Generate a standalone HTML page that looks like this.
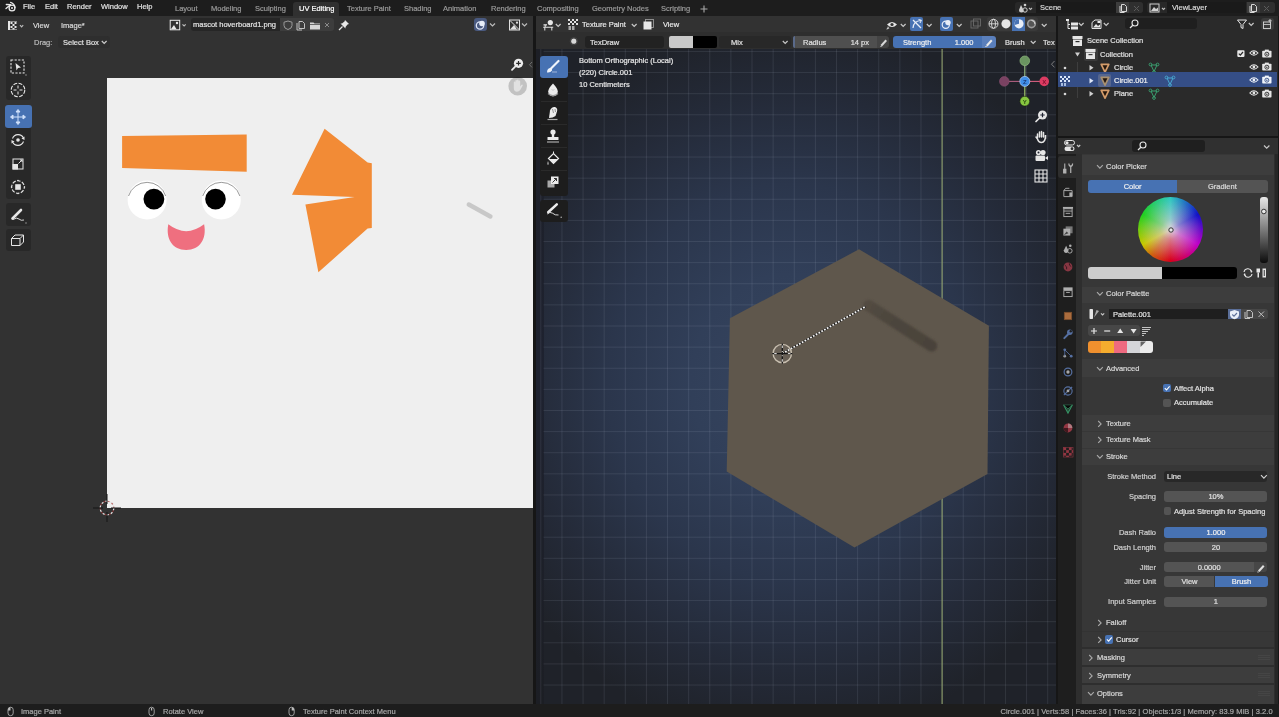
<!DOCTYPE html>
<html><head><meta charset="utf-8">
<style>
*{box-sizing:border-box;margin:0;padding:0}
html,body{width:1279px;height:717px;overflow:hidden;background:#161616}
body{position:relative;font-family:"Liberation Sans",sans-serif;font-size:7.5px;color:#d9d9d9;line-height:1}
.a{position:absolute}
.t{position:absolute;white-space:nowrap;line-height:10px;will-change:transform;-webkit-text-stroke:0.2px currentColor}
svg{position:absolute;overflow:visible}
</style></head><body>
<div class="a" style="left:0px;top:0px;width:1279px;height:16px;background:#1d1d1d;"></div>
<svg style="left:0px;top:0px;" width="20" height="16" viewBox="0 0 20 16"><g fill="none" stroke="#e8e8e8" stroke-width="1.3" stroke-linecap="round"><circle cx="12" cy="8" r="2.9"/><path d="M6 8.6 L10.2 5.1"/><path d="M6.3 4.5 L10.6 4.6"/><path d="M10.6 2.4 Q14.6 3.8 15 7.6"/></g><circle cx="12" cy="8" r="1" fill="#e8e8e8"/></svg>
<div class="t" style="left:22.7px;top:2.44px;color:#e0e0e0;">File</div>
<div class="t" style="left:44.6px;top:2.44px;color:#e0e0e0;">Edit</div>
<div class="t" style="left:67.2px;top:2.44px;color:#e0e0e0;">Render</div>
<div class="t" style="left:100.5px;top:2.44px;color:#e0e0e0;">Window</div>
<div class="t" style="left:137.1px;top:2.44px;color:#e0e0e0;">Help</div>
<div class="a" style="left:292.5px;top:2px;width:46.2px;height:14px;background:#303030;border-radius:3px 3px 0 0"></div>
<div class="t" style="left:175.2px;top:4.23px;color:#9a9a9a;">Layout</div>
<div class="t" style="left:211px;top:4.23px;color:#9a9a9a;">Modeling</div>
<div class="t" style="left:254.6px;top:4.23px;color:#9a9a9a;">Sculpting</div>
<div class="t" style="left:298.5px;top:4.23px;color:#ffffff;">UV Editing</div>
<div class="t" style="left:346.8px;top:4.23px;color:#9a9a9a;">Texture Paint</div>
<div class="t" style="left:403.9px;top:4.23px;color:#9a9a9a;">Shading</div>
<div class="t" style="left:442.9px;top:4.23px;color:#9a9a9a;">Animation</div>
<div class="t" style="left:490.5px;top:4.23px;color:#9a9a9a;">Rendering</div>
<div class="t" style="left:537px;top:4.23px;color:#9a9a9a;">Compositing</div>
<div class="t" style="left:591.9px;top:4.23px;color:#9a9a9a;">Geometry Nodes</div>
<div class="t" style="left:660.6px;top:4.23px;color:#9a9a9a;">Scripting</div>
<svg style="left:700px;top:5px;" width="8" height="8" viewBox="0 0 8 8"><path d="M4 0.5V7.5M0.5 4H7.5" stroke="#a8a8a8" stroke-width="1.1"/></svg>
<div class="a" style="left:1015.3px;top:1.7px;width:127.7px;height:11.8px;background:#282828;border-radius:3px"></div>
<div class="a" style="left:1036px;top:1.7px;width:79.6px;height:11.8px;background:#1a1a1a;"></div>
<div class="t" style="left:1040.4px;top:2.63px;color:#d8d8d8;">Scene</div>
<div class="a" style="left:1115.6px;top:1.7px;width:13.7px;height:11.8px;background:#3d3d3d;"></div>
<div class="a" style="left:1129.3px;top:1.7px;width:13.700000000000045px;height:11.8px;background:#2f2f2f;border-radius:0 3px 3px 0"></div>
<svg style="left:1117.5px;top:2.5px;" width="10" height="10" viewBox="0 0 10 10"><path d="M3.5 1.5h3l2 2V8.5h-5z M2 3v6.5h4.5" fill="none" stroke="#d8d8d8" stroke-width="1"/></svg>
<svg style="left:1132.5px;top:4.5px;" width="7" height="7" viewBox="0 0 7 7"><path d="M1 1L6 6M6 1L1 6" stroke="#5a5a5a" stroke-width="1"/></svg>
<div class="a" style="left:1147.2px;top:1.7px;width:127.7px;height:11.8px;background:#282828;border-radius:3px"></div>
<div class="a" style="left:1166.9px;top:1.7px;width:79.6px;height:11.8px;background:#1a1a1a;"></div>
<div class="t" style="left:1172.3px;top:2.63px;color:#d8d8d8;">ViewLayer</div>
<div class="a" style="left:1246.5px;top:1.7px;width:13.7px;height:11.8px;background:#3d3d3d;"></div>
<div class="a" style="left:1260.2px;top:1.7px;width:14.700000000000045px;height:11.8px;background:#2f2f2f;border-radius:0 3px 3px 0"></div>
<svg style="left:1248.4px;top:2.5px;" width="10" height="10" viewBox="0 0 10 10"><path d="M3.5 1.5h3l2 2V8.5h-5z M2 3v6.5h4.5" fill="none" stroke="#d8d8d8" stroke-width="1"/></svg>
<svg style="left:1263.4px;top:4.5px;" width="7" height="7" viewBox="0 0 7 7"><path d="M1 1L6 6M6 1L1 6" stroke="#5a5a5a" stroke-width="1"/></svg>
<svg style="left:1017px;top:2px;" width="18" height="12" viewBox="0 0 18 12"><path d="M4 3 L2 8 Q2 10.5 4.5 10.5 Q7 10.5 6.5 8 Z" fill="#cfcfcf"/><circle cx="8" cy="8" r="2.2" fill="none" stroke="#cfcfcf" stroke-width="1"/><circle cx="8" cy="3" r="1.3" fill="#cfcfcf"/><path d="M12 6l1.5 1.5L15 6" fill="none" stroke="#bbb" stroke-width="1.1"/></svg>
<svg style="left:1149px;top:2px;" width="20" height="12" viewBox="0 0 20 12"><rect x="1" y="2" width="9" height="8" fill="none" stroke="#cfcfcf" stroke-width="1"/><path d="M2 9l3-4 2 2 2-1.5V9z" fill="#cfcfcf"/><path d="M13 6l1.5 1.5L16 6" fill="none" stroke="#bbb" stroke-width="1.1"/></svg>
<div class="a" style="left:0px;top:16px;width:533px;height:688px;background:#323232;"></div>
<div class="a" style="left:533px;top:16px;width:3px;height:688px;background:#161616;"></div>
<svg style="left:6.5px;top:19.5px;" width="20" height="12" viewBox="0 0 20 12"><rect x="1" y="1" width="9" height="9" fill="#e6e6e6"/><rect x="3" y="1.5" width="7" height="8" fill="#303030"/><path d="M3.5 2h2v2h-2zM5.5 4h2v2h-2zM7.5 2h2v2h-2zM3.5 6h2v2h-2zM7.5 6h2v2h-2zM5.5 8h2v1.5h-2z" fill="#e6e6e6"/><path d="M13 5.2l1.6 1.6 1.6-1.6" fill="none" stroke="#bbb" stroke-width="1.2"/></svg>
<div class="t" style="left:33.3px;top:20.53px;">View</div>
<div class="t" style="left:60.5px;top:20.53px;">Image*</div>
<svg style="left:168px;top:19px;" width="22" height="12" viewBox="0 0 22 12"><rect x="2.2" y="1.3" width="9.5" height="9.5" fill="none" stroke="#e8e8e8" stroke-width="1"/><path d="M2.8 10.3 L6 6 L8.5 10.3Z" fill="#e8e8e8"/><circle cx="9" cy="4" r="1.2" fill="#e8e8e8"/><path d="M14.5 5.3l1.6 1.6 1.6-1.6" fill="none" stroke="#bbb" stroke-width="1.2"/></svg>
<div class="a" style="left:190.5px;top:18.4px;width:90px;height:12.5px;background:#262626;border-radius:3px 0 0 3px"></div>
<div class="t" style="left:193.3px;top:20.34px;color:#e2e2e2;">mascot hoverboard1.png</div>
<div class="a" style="left:280.4px;top:18.4px;width:53.5px;height:12.5px;background:#3d3d3d;border-radius:0 3px 3px 0"></div>
<svg style="left:283px;top:19px;" width="50" height="12" viewBox="0 0 50 12"><path d="M5 2 L9 3.2 V6.5 Q9 9.5 5 10.5 Q1 9.5 1 6.5 V3.2Z" fill="none" stroke="#9a9a9a" stroke-width="1"/><path d="M16 2.5h3.5l2 2V9.5h-5.5z M14 4v7h5" fill="none" stroke="#cfcfcf" stroke-width="0.9"/><path d="M27 3.5h3.5l1 1H37v6H27z" fill="#d8d8d8"/><path d="M27 5.5H37" stroke="#3b3b3b" stroke-width="0.7"/><path d="M42 4L46 8M46 4L42 8" stroke="#8a8a8a" stroke-width="1"/></svg>
<svg style="left:337px;top:18px;" width="14" height="14" viewBox="0 0 14 14"><path d="M8 2 L12 6 L10.5 6.5 L8.5 9 L8.5 10.5 L3.5 5.5 L5 5.5 L7.5 3.5Z" fill="#e8e8e8"/><path d="M5.5 8.5 L2 12" stroke="#e8e8e8" stroke-width="1.2"/></svg>
<div class="a" style="left:473.5px;top:18px;width:13.4px;height:13.4px;background:#4a5a80;border-radius:3px"></div>
<svg style="left:473.5px;top:18px;" width="14" height="14" viewBox="0 0 14 14"><circle cx="6" cy="7.5" r="3.7" fill="none" stroke="#dfe6f5" stroke-width="1.3"/><circle cx="8" cy="5.5" r="2.8" fill="#e8eef8"/></svg>
<svg style="left:489px;top:22px;" width="8" height="6" viewBox="0 0 8 6"><path d="M1 1.5l2.5 2.5 2.5-2.5" fill="none" stroke="#bbb" stroke-width="1.2"/></svg>
<svg style="left:508px;top:19px;" width="14" height="12" viewBox="0 0 14 12"><rect x="1.5" y="1" width="10" height="10" fill="none" stroke="#e0e0e0" stroke-width="1"/><path d="M2 1.5 L11 10.5" stroke="#e0e0e0" stroke-width="1"/><path d="M2 10.5L6 6l3 4.5z" fill="#e0e0e0"/><circle cx="9" cy="3.7" r="1.1" fill="#e0e0e0"/></svg>
<svg style="left:521px;top:22px;" width="8" height="6" viewBox="0 0 8 6"><path d="M1 1.5l2.5 2.5 2.5-2.5" fill="none" stroke="#bbb" stroke-width="1.2"/></svg>
<div class="t" style="left:33.5px;top:37.83px;color:#bdbdbd;">Drag:</div>
<div class="a" style="left:58px;top:36px;width:52px;height:12px;background:#2e2e2e;border-radius:3px"></div>
<div class="t" style="left:63px;top:37.83px;color:#e0e0e0;">Select Box</div>
<svg style="left:100.5px;top:40px;" width="7" height="5" viewBox="0 0 7 5"><path d="M0.8 1l2.4 2.4 2.4-2.4" fill="none" stroke="#ccc" stroke-width="1.2"/></svg>
<div class="a" style="left:107px;top:78px;width:426px;height:430px;background:#efefef;"></div>
<svg style="left:107px;top:78px;" width="426" height="430" viewBox="0 0 426 430"><polygon points="15.1,58 139.7,56.6 139.7,93.8 15.1,89.9" fill="#f28b36"/><circle cx="40.1" cy="122" r="19.5" fill="#ffffff"/><path d="M21.5 118 A19.5 19.5 0 0 1 58.7 118" fill="none" stroke="#555" stroke-width="0.6"/><circle cx="46.9" cy="121.1" r="10.4" fill="#000"/><circle cx="114.3" cy="122" r="19.5" fill="#ffffff"/><path d="M95.7 118 A19.5 19.5 0 0 1 132.9 118" fill="none" stroke="#555" stroke-width="0.6"/><circle cx="108.5" cy="121.1" r="10.3" fill="#000"/><path d="M61.3 146.3 Q79.2 160 97.1 146.3 C100 161 93 172 79.2 172 C65.5 172 58.5 161 61.3 146.3Z" fill="#ef6f7f"/><polygon points="217.6,50.8 260.6,84.5 264.8,85.2 264.8,149.9 260.6,150.6 211.4,194.2 198.4,126.5 247.6,118.9 185,116.8" fill="#f28b36"/><path d="M361.8 126.5 L383.4 138.5" stroke="#c8c8c8" stroke-width="4.5" stroke-linecap="round"/></svg>
<svg style="left:507px;top:76px;" width="22" height="22" viewBox="0 0 22 22"><circle cx="10.7" cy="10.1" r="9.3" fill="rgba(0,0,0,0.19)"/><path d="M6.8 11.5 V6.5 Q6.8 5.6 7.6 5.6 Q8.4 5.6 8.4 6.5 V10 V4.8 Q8.4 3.9 9.2 3.9 Q10 3.9 10 4.8 V10 V4.5 Q10 3.6 10.8 3.6 Q11.6 3.6 11.6 4.5 V10 V5.5 Q11.6 4.6 12.4 4.6 Q13.2 4.6 13.2 5.5 V10.5 L14.2 9 Q15 8.2 15.6 8.8 Q16 9.3 15.5 10 L13.2 14 Q12 15.8 10 15.8 Q6.8 15.8 6.8 12Z" fill="rgba(255,255,255,0.5)"/></svg>
<svg style="left:509px;top:57px;" width="18" height="16" viewBox="0 0 18 16"><circle cx="9.5" cy="6.3" r="4.6" fill="#ececec"/><path d="M9.5 4V8.6M7.2 6.3H11.8" stroke="#2a2a2a" stroke-width="1.2"/><path d="M6.2 9.6 L3 12.8" stroke="#ececec" stroke-width="1.8" stroke-linecap="round"/></svg>
<svg style="left:528px;top:61px;" width="6" height="8" viewBox="0 0 6 8"><path d="M4 1 L1.5 3.7 L4 6.4" fill="none" stroke="#777" stroke-width="0.9"/></svg>
<svg style="left:92px;top:493px;" width="30" height="30" viewBox="0 0 30 30"><circle cx="15" cy="15" r="6.8" fill="none" stroke="#e8e8e8" stroke-width="1.2" stroke-dasharray="2.4 1.9"/><circle cx="15" cy="15" r="6.8" fill="none" stroke="#a03030" stroke-width="1.2" stroke-dasharray="1.9 2.4" stroke-dashoffset="-2.4" opacity="0.7"/><path d="M15 1V11M15 19V29M1 15H11M19 15H29" stroke="#151515" stroke-width="1"/></svg>
<div class="a" style="left:6px;top:56px;width:25px;height:44px;background:#282828;border-radius:3px"></div>
<div class="a" style="left:6px;top:105px;width:25px;height:94px;background:#282828;border-radius:3px"></div>
<div class="a" style="left:6px;top:203px;width:25px;height:23px;background:#282828;border-radius:3px"></div>
<div class="a" style="left:6px;top:229px;width:25px;height:22px;background:#282828;border-radius:3px"></div>
<div class="a" style="left:5px;top:105px;width:27.4px;height:22.5px;background:#4772b3;border-radius:3px"></div>
<svg style="left:9px;top:58px;" width="18" height="18" viewBox="0 0 18 18"><rect x="2" y="2" width="13" height="13" fill="none" stroke="#e6e6e6" stroke-width="1.1" stroke-dasharray="2.2 1.4"/><path d="M6.5 5 L12 9.5 L9 10 L7.5 12.5Z" fill="#e6e6e6"/><circle cx="17" cy="17" r="0.7" fill="#aaa"/></svg>
<svg style="left:9px;top:81px;" width="18" height="18" viewBox="0 0 18 18"><circle cx="9" cy="9" r="6.8" fill="none" stroke="#e6e6e6" stroke-width="1.1" stroke-dasharray="4 1.4"/><path d="M9 4.5V7.5M9 10.5V13.5M4.5 9H7.5M10.5 9H13.5" stroke="#e6e6e6" stroke-width="1"/></svg>
<svg style="left:9px;top:108px;" width="18" height="18" viewBox="0 0 18 18"><g fill="#cfe0fa" stroke="#cfe0fa" stroke-width="1"><path d="M9 3V15M3 9H15" fill="none"/><path d="M9 1.5L7 4H11Z"/><path d="M9 16.5L7 14H11Z"/><path d="M1.5 9L4 7V11Z"/><path d="M16.5 9L14 7V11Z"/></g></svg>
<svg style="left:9px;top:131px;" width="18" height="18" viewBox="0 0 18 18"><path d="M3.5 7.5 A6 6 0 0 1 14.5 7" fill="none" stroke="#e6e6e6" stroke-width="1.1"/><path d="M14.5 10.5 A6 6 0 0 1 3.5 11" fill="none" stroke="#e6e6e6" stroke-width="1.1"/><path d="M12.5 7.5L15.5 5.5L15.5 9Z M5.5 10.5L2.5 12.5L2.5 9Z" fill="#e6e6e6"/><circle cx="9" cy="9" r="1.8" fill="#e6e6e6"/></svg>
<svg style="left:9px;top:155px;" width="18" height="18" viewBox="0 0 18 18"><rect x="4" y="4" width="10" height="10" fill="none" stroke="#e6e6e6" stroke-width="1"/><rect x="3.5" y="9" width="5.5" height="5.5" fill="#e6e6e6"/><path d="M9.5 8.5L13 5M11 5H13V7" fill="none" stroke="#e6e6e6" stroke-width="1"/></svg>
<svg style="left:9px;top:178px;" width="18" height="18" viewBox="0 0 18 18"><circle cx="9" cy="9" r="6.3" fill="none" stroke="#e6e6e6" stroke-width="1.1" stroke-dasharray="3.5 1.45" stroke-dashoffset="1.7"/><rect x="6.2" y="6.2" width="5.6" height="5.6" fill="#e6e6e6"/><path d="M9 1.5L8 3H10ZM9 16.5L8 15H10ZM1.5 9L3 8V10ZM16.5 9L15 8V10Z" fill="#e6e6e6"/></svg>
<svg style="left:9px;top:206px;" width="18" height="18" viewBox="0 0 18 18"><path d="M3.5 12.5 L12 4" stroke="#e6e6e6" stroke-width="2.6" stroke-linecap="round"/><path d="M4 13.5 Q8 11 10 13 Q12 15 15 14" fill="none" stroke="#e6e6e6" stroke-width="0.9"/><circle cx="17" cy="17" r="0.7" fill="#aaa"/></svg>
<svg style="left:9px;top:231px;" width="18" height="18" viewBox="0 0 18 18"><path d="M2.5 7.5 L6 4 H14.5 V11 L11 14.5 H2.5Z M2.5 7.5 H11 V14.5 M11 7.5 L14.5 4" fill="none" stroke="#e6e6e6" stroke-width="1"/></svg>
<div class="a" style="left:0px;top:704px;width:1279px;height:13px;background:#1d1d1d;"></div>
<svg style="left:7px;top:705.5px;" width="8" height="11" viewBox="0 0 8 11"><rect x="1" y="1.2" width="5.2" height="8.5" rx="2.6" fill="none" stroke="#aaa" stroke-width="0.9"/><path d="M3.5 1.2 Q1 1.2 1 4 V4.5 H3.5Z" fill="#bbb"/></svg>
<div class="t" style="left:21.3px;top:706.83px;color:#a8a8a8;">Image Paint</div>
<svg style="left:147.5px;top:705.5px;" width="8" height="11" viewBox="0 0 8 11"><rect x="1" y="1.2" width="5.2" height="8.5" rx="2.6" fill="none" stroke="#aaa" stroke-width="0.9"/><rect x="3" y="2" width="1.2" height="2.5" fill="#bbb"/></svg>
<div class="t" style="left:162.6px;top:706.83px;color:#a8a8a8;">Rotate View</div>
<svg style="left:288px;top:705.5px;" width="8" height="11" viewBox="0 0 8 11"><rect x="1" y="1.2" width="5.2" height="8.5" rx="2.6" fill="none" stroke="#aaa" stroke-width="0.9"/><path d="M3.7 1.2 Q6.2 1.2 6.2 4 V4.5 H3.7Z" fill="#bbb"/></svg>
<div class="t" style="left:303.1px;top:706.83px;color:#a8a8a8;">Texture Paint Context Menu</div>
<div class="t" style="left:1000px;top:706.83px;color:#a8a8a8;width:272.7px;text-align:right;letter-spacing:0.065px">Circle.001 | Verts:58 | Faces:36 | Tris:92 | Objects:1/3 | Memory: 83.9 MiB | 3.2.0</div>
<div class="a" style="left:536px;top:16px;width:520px;height:688px;background:radial-gradient(ellipse 330px 360px at 254px 366px,#36455f 0%,#313f59 30%,#2b364c 55%,#242a38 80%,#1f2229 100%);"></div>
<div class="a" style="left:536px;top:48.6px;width:7.5px;height:655.4px;background:linear-gradient(#1d1f26,#1e2230 50%,#1c1e24);"></div>
<svg style="left:536px;top:16px;" width="520" height="688" viewBox="0 0 520 688"><g stroke="rgba(205,215,235,0.105)" stroke-width="1"><line x1="4.82" y1="32.6" x2="4.82" y2="688"/><line x1="25.94" y1="32.6" x2="25.94" y2="688"/><line x1="47.06" y1="32.6" x2="47.06" y2="688"/><line x1="68.18" y1="32.6" x2="68.18" y2="688"/><line x1="89.30" y1="32.6" x2="89.30" y2="688"/><line x1="110.42" y1="32.6" x2="110.42" y2="688"/><line x1="131.54" y1="32.6" x2="131.54" y2="688"/><line x1="152.66" y1="32.6" x2="152.66" y2="688"/><line x1="173.78" y1="32.6" x2="173.78" y2="688"/><line x1="194.90" y1="32.6" x2="194.90" y2="688"/><line x1="216.02" y1="32.6" x2="216.02" y2="688"/><line x1="237.14" y1="32.6" x2="237.14" y2="688"/><line x1="258.26" y1="32.6" x2="258.26" y2="688"/><line x1="279.38" y1="32.6" x2="279.38" y2="688"/><line x1="300.50" y1="32.6" x2="300.50" y2="688"/><line x1="321.62" y1="32.6" x2="321.62" y2="688"/><line x1="342.74" y1="32.6" x2="342.74" y2="688"/><line x1="363.86" y1="32.6" x2="363.86" y2="688"/><line x1="384.98" y1="32.6" x2="384.98" y2="688"/><line x1="406.10" y1="32.6" x2="406.10" y2="688"/><line x1="427.22" y1="32.6" x2="427.22" y2="688"/><line x1="448.34" y1="32.6" x2="448.34" y2="688"/><line x1="469.46" y1="32.6" x2="469.46" y2="688"/><line x1="490.58" y1="32.6" x2="490.58" y2="688"/><line x1="511.70" y1="32.6" x2="511.70" y2="688"/><line x1="7.5" y1="35.44" x2="520" y2="35.44"/><line x1="7.5" y1="56.56" x2="520" y2="56.56"/><line x1="7.5" y1="77.68" x2="520" y2="77.68"/><line x1="7.5" y1="98.80" x2="520" y2="98.80"/><line x1="7.5" y1="119.92" x2="520" y2="119.92"/><line x1="7.5" y1="141.04" x2="520" y2="141.04"/><line x1="7.5" y1="162.16" x2="520" y2="162.16"/><line x1="7.5" y1="183.28" x2="520" y2="183.28"/><line x1="7.5" y1="204.40" x2="520" y2="204.40"/><line x1="7.5" y1="225.52" x2="520" y2="225.52"/><line x1="7.5" y1="246.64" x2="520" y2="246.64"/><line x1="7.5" y1="267.76" x2="520" y2="267.76"/><line x1="7.5" y1="288.88" x2="520" y2="288.88"/><line x1="7.5" y1="310.00" x2="520" y2="310.00"/><line x1="7.5" y1="331.12" x2="520" y2="331.12"/><line x1="7.5" y1="352.24" x2="520" y2="352.24"/><line x1="7.5" y1="373.36" x2="520" y2="373.36"/><line x1="7.5" y1="394.48" x2="520" y2="394.48"/><line x1="7.5" y1="415.60" x2="520" y2="415.60"/><line x1="7.5" y1="436.72" x2="520" y2="436.72"/><line x1="7.5" y1="457.84" x2="520" y2="457.84"/><line x1="7.5" y1="478.96" x2="520" y2="478.96"/><line x1="7.5" y1="500.08" x2="520" y2="500.08"/><line x1="7.5" y1="521.20" x2="520" y2="521.20"/><line x1="7.5" y1="542.32" x2="520" y2="542.32"/><line x1="7.5" y1="563.44" x2="520" y2="563.44"/><line x1="7.5" y1="584.56" x2="520" y2="584.56"/><line x1="7.5" y1="605.68" x2="520" y2="605.68"/><line x1="7.5" y1="626.80" x2="520" y2="626.80"/><line x1="7.5" y1="647.92" x2="520" y2="647.92"/><line x1="7.5" y1="669.04" x2="520" y2="669.04"/></g></svg>
<svg style="left:0px;top:0px;" width="1279" height="717" viewBox="0 0 1279 717"><line x1="942.1" y1="48.6" x2="942.1" y2="704" stroke="#98aa70" stroke-width="1"/><polygon points="859,249.3 988.9,325.7 987.5,474 854.5,547.4 726.7,471.5 729.9,318.3" fill="#5f574c"/><defs><filter id="bl" x="-20%" y="-20%" width="140%" height="140%"><feGaussianBlur stdDeviation="0.9"/></filter><linearGradient id="sg" gradientUnits="userSpaceOnUse" x1="862" y1="301" x2="936" y2="349"><stop offset="0" stop-color="#544d43"/><stop offset="0.35" stop-color="#4d463d"/><stop offset="1" stop-color="#4a433a"/></linearGradient></defs><path d="M868.5 305.5 L931.5 345.8" stroke="url(#sg)" stroke-width="11.5" stroke-linecap="round" filter="url(#bl)"/></svg>
<div class="a" style="left:536px;top:16px;width:520px;height:16px;background:#323232;"></div>
<div class="a" style="left:536px;top:32px;width:520px;height:16.6px;background:#2e2e2e;"></div>
<svg style="left:542px;top:18px;" width="14" height="13" viewBox="0 0 14 13"><circle cx="8.3" cy="4.6" r="2.6" fill="#e6e6e6"/><path d="M1.2 9.2H11.2M1.5 6.9H5" stroke="#e6e6e6" stroke-width="1.1"/><path d="M2.8 9.2V12.5M9.8 9.2V12.5M3.2 6.9V9" stroke="#e6e6e6" stroke-width="1"/></svg>
<svg style="left:555px;top:22.5px;" width="7" height="5" viewBox="0 0 7 5"><path d="M0.8 1l2.4 2.4 2.4-2.4" fill="none" stroke="#c8c8c8" stroke-width="1.2"/></svg>
<svg style="left:567px;top:18px;" width="12" height="13" viewBox="0 0 12 13"><g fill="#e0e0e0"><rect x="1" y="1" width="2" height="2"/><rect x="5" y="1" width="2" height="2"/><rect x="9" y="1" width="2" height="2"/><rect x="3" y="3" width="2" height="2"/><rect x="7" y="3" width="2" height="2"/><rect x="1" y="5" width="2" height="2"/><rect x="5" y="5" width="2" height="2"/><rect x="9" y="5" width="2" height="2"/><rect x="1.5" y="8" width="2.5" height="4" fill="#aaa"/><rect x="5" y="8" width="2.5" height="4" fill="#aaa"/></g></svg>
<div class="t" style="left:582.2px;top:19.73px;color:#e6e6e6;">Texture Paint</div>
<svg style="left:631px;top:22.5px;" width="7" height="5" viewBox="0 0 7 5"><path d="M0.8 1l2.4 2.4 2.4-2.4" fill="none" stroke="#c8c8c8" stroke-width="1.2"/></svg>
<svg style="left:642px;top:18px;" width="13" height="13" viewBox="0 0 13 13"><rect x="3.5" y="1.5" width="8" height="8" fill="none" stroke="#999" stroke-width="0.9"/><rect x="1.5" y="3.5" width="8" height="8" fill="#e8e8e8"/></svg>
<div class="t" style="left:663.2px;top:19.73px;color:#e6e6e6;">View</div>
<svg style="left:885px;top:18px;" width="14" height="13" viewBox="0 0 14 13"><path d="M2 6.5 Q7 1.5 12 6.5 Q7 11.5 2 6.5Z" fill="#e6e6e6"/><circle cx="7" cy="6.5" r="1.6" fill="#303030"/><path d="M3 8 L1 12 L4.5 10.5Z" fill="#e6e6e6" stroke="#303030" stroke-width="0.5"/></svg>
<svg style="left:899.5px;top:22.5px;" width="7" height="5" viewBox="0 0 7 5"><path d="M0.8 1l2.4 2.4 2.4-2.4" fill="none" stroke="#c8c8c8" stroke-width="1.2"/></svg>
<div class="a" style="left:909.5px;top:17px;width:13.5px;height:13.5px;background:#4772b3;border-radius:2px"></div>
<svg style="left:909.5px;top:17px;" width="14" height="14" viewBox="0 0 14 14"><path d="M3 11 Q3.5 4 11 3.5" fill="none" stroke="#e8eef8" stroke-width="1.2"/><path d="M3 3 L11 11" stroke="#e8eef8" stroke-width="1.2"/><path d="M8.5 2.5L11.5 3.2L10 6" fill="none" stroke="#e8eef8" stroke-width="1"/></svg>
<svg style="left:926px;top:22.5px;" width="7" height="5" viewBox="0 0 7 5"><path d="M0.8 1l2.4 2.4 2.4-2.4" fill="none" stroke="#c8c8c8" stroke-width="1.2"/></svg>
<div class="a" style="left:939.5px;top:17px;width:13.5px;height:13.5px;background:#4772b3;border-radius:2px"></div>
<svg style="left:939.5px;top:17px;" width="14" height="14" viewBox="0 0 14 14"><circle cx="5.8" cy="7.8" r="3.6" fill="none" stroke="#e8eef8" stroke-width="1.2"/><circle cx="8" cy="5.6" r="2.7" fill="#e8eef8"/></svg>
<svg style="left:956px;top:22.5px;" width="7" height="5" viewBox="0 0 7 5"><path d="M0.8 1l2.4 2.4 2.4-2.4" fill="none" stroke="#c8c8c8" stroke-width="1.2"/></svg>
<svg style="left:969px;top:17px;" width="14" height="14" viewBox="0 0 14 14"><rect x="2" y="4" width="7" height="7" fill="none" stroke="#6a6a6a" stroke-width="0.9"/><rect x="4.5" y="2" width="7" height="7" fill="none" stroke="#6a6a6a" stroke-width="0.9"/></svg>
<div class="a" style="left:986.5px;top:17px;width:51px;height:13.5px;background:#3a3a3a;border-radius:3px"></div>
<div class="a" style="left:1012px;top:17px;width:13px;height:13.5px;background:#4772b3;"></div>
<svg style="left:986.5px;top:17px;" width="52" height="14" viewBox="0 0 52 14"><g fill="none" stroke="#e0e0e0" stroke-width="0.9"><circle cx="6.5" cy="6.8" r="4.5"/><ellipse cx="6.5" cy="6.8" rx="2" ry="4.5"/><path d="M2 6.8H11"/></g><circle cx="19" cy="6.8" r="4.6" fill="#e6e6e6"/><circle cx="32" cy="6.8" r="4.6" fill="#e8eef8"/><path d="M32 2.2 A4.6 4.6 0 0 0 27.6 8 L32 6.8Z" fill="#4772b3"/><circle cx="44.5" cy="6.8" r="4.6" fill="#9a9a9a"/><circle cx="44.5" cy="6.8" r="3" fill="#555"/><path d="M44.5 3.5 A3.3 3.3 0 0 1 47.8 6.8" stroke="#ddd" fill="none" stroke-width="1"/></svg>
<svg style="left:1040.5px;top:22.5px;" width="7" height="5" viewBox="0 0 7 5"><path d="M0.8 1l2.4 2.4 2.4-2.4" fill="none" stroke="#c8c8c8" stroke-width="1.2"/></svg>
<svg style="left:569px;top:36px;" width="10" height="10" viewBox="0 0 10 10"><circle cx="4.8" cy="5.2" r="2.6" fill="#d8d8d8"/><circle cx="4.8" cy="5.2" r="3.6" fill="none" stroke="#555" stroke-width="0.6"/></svg>
<div class="a" style="left:585.3px;top:36.2px;width:79.2px;height:11.8px;background:#222222;border-radius:3px"></div>
<div class="t" style="left:590px;top:37.63px;color:#e0e0e0;">TexDraw</div>
<div class="a" style="left:669.2px;top:36px;width:23.4px;height:11.8px;background:#c9c9c9;border-radius:2px 0 0 2px"></div>
<div class="a" style="left:692.6px;top:36px;width:24.4px;height:11.8px;background:#000000;border-radius:0 2px 2px 0"></div>
<div class="a" style="left:719px;top:36px;width:71.5px;height:11.8px;background:#282828;border-radius:3px"></div>
<div class="t" style="left:730.7px;top:37.63px;color:#e0e0e0;">Mix</div>
<svg style="left:782px;top:40px;" width="7" height="5" viewBox="0 0 7 5"><path d="M0.8 1l2.4 2.4 2.4-2.4" fill="none" stroke="#c8c8c8" stroke-width="1.2"/></svg>
<div class="a" style="left:792.7px;top:35.8px;width:84.7px;height:11.9px;background:#4f4f4f;border-radius:3px 0 0 3px"></div>
<div class="a" style="left:792.7px;top:35.8px;width:2.5px;height:11.9px;background:#5a6a8a;border-radius:3px 0 0 3px"></div>
<div class="t" style="left:803px;top:37.63px;color:#e0e0e0;">Radius</div>
<div class="t" style="left:830px;top:37.63px;color:#e0e0e0;width:39px;text-align:right;">14 px</div>
<div class="a" style="left:877.4px;top:35.8px;width:11.4px;height:11.9px;background:#444444;border-radius:0 3px 3px 0"></div>
<svg style="left:878px;top:36px;" width="11" height="12" viewBox="0 0 11 12"><path d="M2.5 9 L7.5 3.5 L9 5 L4 10.5Z" fill="#d8d8d8"/><path d="M2 10.5 h2" stroke="#aaa" stroke-width="0.8"/></svg>
<div class="a" style="left:893.4px;top:35.8px;width:88.4px;height:11.9px;background:#4772b3;border-radius:3px 0 0 3px"></div>
<div class="t" style="left:903px;top:37.63px;color:#f0f0f0;">Strength</div>
<div class="t" style="left:930px;top:37.63px;color:#f0f0f0;width:43.5px;text-align:right;">1.000</div>
<div class="a" style="left:981.8px;top:35.8px;width:13.8px;height:11.9px;background:#5a7fbb;border-radius:0 3px 3px 0"></div>
<svg style="left:983px;top:36px;" width="12" height="12" viewBox="0 0 12 12"><path d="M3 9 L8 3.5 L9.5 5 L4.5 10.5Z" fill="#e8e8e8"/><path d="M2 10.5 h2" stroke="#ccc" stroke-width="0.8"/></svg>
<div class="t" style="left:1005px;top:37.63px;color:#e0e0e0;">Brush</div>
<svg style="left:1030px;top:40px;" width="7" height="5" viewBox="0 0 7 5"><path d="M0.8 1l2.4 2.4 2.4-2.4" fill="none" stroke="#c8c8c8" stroke-width="1.2"/></svg>
<div class="t" style="left:1043px;top:37.63px;color:#e0e0e0;">Tex</div>
<div class="a" style="left:539.8px;top:55.5px;width:28px;height:140px;background:#1d1d1d;border-radius:3px"></div>
<div class="a" style="left:539.8px;top:199.5px;width:28px;height:22.2px;background:#1d1d1d;border-radius:3px"></div>
<div class="a" style="left:541px;top:101px;width:25.5px;height:0.7px;background:#2a2a2a;"></div>
<div class="a" style="left:541px;top:124px;width:25.5px;height:0.7px;background:#2a2a2a;"></div>
<div class="a" style="left:541px;top:147px;width:25.5px;height:0.7px;background:#2a2a2a;"></div>
<div class="a" style="left:541px;top:170px;width:25.5px;height:0.7px;background:#2a2a2a;"></div>
<div class="a" style="left:539.8px;top:55.7px;width:28px;height:22.3px;background:#4772b3;border-radius:3px"></div>
<svg style="left:544px;top:58px;" width="18" height="18" viewBox="0 0 18 18"><path d="M7 10.5 L14.5 3" stroke="#eef3fb" stroke-width="2.2" stroke-linecap="round"/><path d="M3 14.5 Q3 10.5 6 10 Q8.5 10.5 8 12.5 Q6.5 15 3 14.5Z" fill="#eef3fb"/><path d="M8 14 H13" stroke="#a9bde0" stroke-width="0.9"/></svg>
<svg style="left:544px;top:81px;" width="18" height="18" viewBox="0 0 18 18"><path d="M9 2.5 Q13.8 7.5 13.8 10.5 A4.8 4.8 0 0 1 4.2 10.5 Q4.2 7.5 9 2.5Z" fill="#ececec"/><path d="M4 12.5 Q9 17 14 12.5" fill="none" stroke="#9a9a9a" stroke-width="1.3"/><path d="M7.5 8.5 Q9 10 10.5 8.5" stroke="#bbb" stroke-width="0.7" fill="none"/></svg>
<svg style="left:544px;top:104px;" width="18" height="18" viewBox="0 0 18 18"><path d="M5 14 L6 6.5 Q7.5 2.5 11 3 Q14 4 13 7.5 L11.5 12 Q9 14 5 14Z" fill="#ececec"/><path d="M3.5 15.5 H13.5" stroke="#aaa" stroke-width="1.2"/><path d="M8.5 5 L9.5 9 M11 5 L11.5 8" stroke="#555" stroke-width="0.6"/></svg>
<svg style="left:544px;top:127px;" width="18" height="18" viewBox="0 0 18 18"><circle cx="9" cy="5" r="2.6" fill="#ececec"/><rect x="7.8" y="7" width="2.4" height="3.5" fill="#ececec"/><rect x="3.5" y="10" width="11" height="3" rx="0.5" fill="#ececec"/><path d="M3 15 H15" stroke="#aaa" stroke-width="1.2"/></svg>
<svg style="left:544px;top:150px;" width="18" height="18" viewBox="0 0 18 18"><path d="M4.5 8.5 L9.5 3.5 L14.5 8.5 L9.5 13.5Z" fill="none" stroke="#ececec" stroke-width="1.2"/><path d="M5.3 9 H13.7 L9.5 13.2Z" fill="#ececec"/><path d="M4 11 Q2.5 14 4 15 Q5.5 14 4 11Z" fill="#aaa"/><path d="M9.5 3.5 V1.5" stroke="#ececec" stroke-width="1"/></svg>
<svg style="left:544px;top:173px;" width="18" height="18" viewBox="0 0 18 18"><rect x="3.5" y="7.5" width="7" height="7" fill="#a8a8a8"/><rect x="7" y="3.5" width="7.5" height="7.5" fill="#ececec"/><path d="M8.5 9.5 L12.5 5.5 M10 5.5 H12.5 V8" stroke="#333" stroke-width="1" fill="none"/></svg>
<svg style="left:544px;top:201px;" width="18" height="18" viewBox="0 0 18 18"><path d="M4.2 11.2 L12.8 3.4" stroke="#ececec" stroke-width="2.5" stroke-linecap="round"/><path d="M3.2 13 Q6 10.2 8.5 12.2 Q11 14.5 14.5 14" fill="none" stroke="#d8d8d8" stroke-width="1"/><circle cx="17.2" cy="16.3" r="0.8" fill="#aaa"/></svg>
<div class="t" style="left:579.2px;top:56.33px;color:#e8e8e8;">Bottom Orthographic (Local)</div>
<div class="t" style="left:579.2px;top:68.14px;color:#e8e8e8;">(220) Circle.001</div>
<div class="t" style="left:579.2px;top:79.94px;color:#e8e8e8;">10 Centimeters</div>
<svg style="left:995px;top:50px;" width="60" height="60" viewBox="0 0 60 60"><line x1="29.8" y1="31.4" x2="29.8" y2="10.8" stroke="#9cc088" stroke-width="1.1"/><line x1="29.8" y1="31.4" x2="29.8" y2="51.2" stroke="#a8d070" stroke-width="1.1"/><line x1="29.8" y1="31.4" x2="9.3" y2="31.4" stroke="#b06080" stroke-width="1.1"/><line x1="29.8" y1="31.4" x2="49.2" y2="31.4" stroke="#d86080" stroke-width="1.1"/><circle cx="29.8" cy="10.8" r="4.8" fill="#6a9460" stroke="#88b078" stroke-width="0.8"/><circle cx="9.3" cy="31.4" r="4.8" fill="#7a4262" stroke="#8a5070" stroke-width="0.6"/><circle cx="49.2" cy="31.4" r="4.8" fill="#dc3c62"/><circle cx="29.8" cy="51.2" r="4.9" fill="#86c640" stroke="#1a2010" stroke-width="0.6"/><circle cx="29.8" cy="31.4" r="5" fill="#3f8ee8" stroke="#a8c8f0" stroke-width="0.8"/><text x="29.8" y="33.8" font-size="6" font-family="Liberation Sans" font-weight="bold" text-anchor="middle" fill="#1c3a78">Z</text><text x="29.8" y="53.6" font-size="6" font-family="Liberation Sans" font-weight="bold" text-anchor="middle" fill="#2a4010">Y</text><text x="49.2" y="33.6" font-size="6" font-family="Liberation Sans" font-weight="bold" text-anchor="middle" fill="#801030">X</text></svg>
<svg style="left:1050px;top:60px;" width="6" height="9" viewBox="0 0 6 9"><path d="M4.5 1 L1.5 4.2 L4.5 7.4" fill="none" stroke="#888" stroke-width="0.9"/></svg>
<svg style="left:1033px;top:108px;" width="16" height="16" viewBox="0 0 16 16"><circle cx="9.5" cy="7" r="4.5" fill="#e6e6e6"/><path d="M9.5 4.8V9.2M7.3 7H11.7" stroke="#1e2230" stroke-width="1.2"/><path d="M6.5 10 L3 13.5" stroke="#e6e6e6" stroke-width="1.7" stroke-linecap="round"/></svg>
<svg style="left:1033px;top:129px;" width="16" height="16" viewBox="0 0 16 16"><path d="M4.5 9 V5 M6.5 8 V3 M8.5 8 V2.5 M10.5 8 V3.5 M12.5 9.5 V6 Q12.5 13.5 8.5 13.5 Q5.5 13.5 4.5 10 L3 8" fill="none" stroke="#e6e6e6" stroke-width="1.5" stroke-linecap="round"/></svg>
<svg style="left:1033px;top:148px;" width="16" height="16" viewBox="0 0 16 16"><circle cx="5.5" cy="4.5" r="2.6" fill="#e6e6e6"/><circle cx="10" cy="4.5" r="2.6" fill="#e6e6e6"/><rect x="2.5" y="7.5" width="9.5" height="5.5" rx="1" fill="#e6e6e6"/><path d="M12 10 L15 8 V12Z" fill="#e6e6e6"/><circle cx="5.5" cy="4.5" r="1" fill="#1e2230"/></svg>
<svg style="left:1033px;top:168px;" width="16" height="16" viewBox="0 0 16 16"><g fill="none" stroke="#e6e6e6" stroke-width="1.1"><rect x="2" y="2" width="12" height="12"/><path d="M6 2V14M10 2V14M2 6H14M2 10H14"/></g></svg>
<svg style="left:0px;top:0px;" width="1279" height="717" viewBox="0 0 1279 717"><line x1="782.3" y1="353.6" x2="865.4" y2="306.7" stroke="#1a1a1a" stroke-width="1.7"/><line x1="782.3" y1="353.6" x2="865.4" y2="306.7" stroke="#f4f4f4" stroke-width="1.7" stroke-dasharray="1.8 1.4"/><circle cx="782.3" cy="353.6" r="9.2" fill="rgba(255,255,255,0.06)" stroke="#c8bfb0" stroke-width="1.4"/><path d="M782.3 343.5 V363.7 M772.2 353.6 H792.4" stroke="#151515" stroke-width="1.3"/><path d="M782.3 345.5 V348 M782.3 351 V352 M782.3 355.2 V356.2 M782.3 359.2 V361.7 M774.2 353.6 H776.7 M787.9 353.6 H790.4" stroke="#e8e8e8" stroke-width="1"/></svg>
<div class="a" style="left:1056px;top:16px;width:223px;height:688px;background:#161616;"></div>
<div class="a" style="left:1057.5px;top:16px;width:220px;height:119.5px;background:#2a2a2a;"></div>
<div class="a" style="left:1057.5px;top:16px;width:220px;height:15px;background:#2a2a2a;"></div>
<svg style="left:1065px;top:18px;" width="14" height="12" viewBox="0 0 14 12"><path d="M1.5 2H4M3 2V10.5H5M3 6.5H5" stroke="#e6e6e6" stroke-width="1" fill="none"/><rect x="6" y="4.5" width="7" height="3" fill="#e6e6e6"/><rect x="6" y="8.5" width="7" height="3" fill="#e6e6e6"/><rect x="1" y="1" width="3" height="2" fill="#e6e6e6"/></svg>
<svg style="left:1077.5px;top:21.5px;" width="7" height="5" viewBox="0 0 7 5"><path d="M0.8 1l2.4 2.4 2.4-2.4" fill="none" stroke="#c8c8c8" stroke-width="1.2"/></svg>
<svg style="left:1090px;top:18px;" width="14" height="12" viewBox="0 0 14 12"><path d="M2 10.5 V4.5 L5 2 H11 V10.5Z" fill="none" stroke="#e6e6e6" stroke-width="1"/><path d="M3 9.5 L6 6 L8 8 L10 6.5 V9.5Z" fill="#e6e6e6"/><rect x="7.5" y="3" width="3" height="2" fill="#e6e6e6"/></svg>
<svg style="left:1102.5px;top:21.5px;" width="7" height="5" viewBox="0 0 7 5"><path d="M0.8 1l2.4 2.4 2.4-2.4" fill="none" stroke="#c8c8c8" stroke-width="1.2"/></svg>
<div class="a" style="left:1125px;top:17.8px;width:72px;height:11.7px;background:#1f1f1f;border-radius:3px"></div>
<svg style="left:1128px;top:18px;" width="12" height="12" viewBox="0 0 12 12"><circle cx="7" cy="5" r="3" fill="none" stroke="#e6e6e6" stroke-width="1.1"/><path d="M4.8 7.2 L2 10" stroke="#e6e6e6" stroke-width="1.3"/></svg>
<svg style="left:1236px;top:18px;" width="12" height="12" viewBox="0 0 12 12"><path d="M1.5 2 H10.5 L7 6.5 V10.5 L5 9.5 V6.5Z" fill="none" stroke="#e6e6e6" stroke-width="1"/></svg>
<svg style="left:1248px;top:21.5px;" width="7" height="5" viewBox="0 0 7 5"><path d="M0.8 1l2.4 2.4 2.4-2.4" fill="none" stroke="#c8c8c8" stroke-width="1.2"/></svg>
<div class="a" style="left:1260.5px;top:17.5px;width:13px;height:12.5px;background:#3b3b3b;border-radius:3px"></div>
<svg style="left:1261px;top:18px;" width="12" height="12" viewBox="0 0 12 12"><rect x="2.5" y="4" width="7" height="6.5" fill="none" stroke="#d8d8d8" stroke-width="0.9"/><path d="M2.5 6.5H9.5" stroke="#d8d8d8" stroke-width="0.8"/><path d="M9 1V4.5M7.3 2.8H10.7" stroke="#d8d8d8" stroke-width="0.9"/></svg>
<svg style="left:1071px;top:35px;" width="14" height="12" viewBox="0 0 14 12"><rect x="1.5" y="1" width="10" height="3" fill="#e6e6e6"/><rect x="2" y="4.5" width="9" height="6.5" fill="#e6e6e6"/><rect x="4.5" y="6" width="4" height="1.2" fill="#282828"/></svg>
<div class="t" style="left:1086.7px;top:36.23px;color:#e0e0e0;">Scene Collection</div>
<svg style="left:1074px;top:51px;" width="7" height="7" viewBox="0 0 7 7"><path d="M1 1.5 H6 L3.5 5.5Z" fill="#d0d0d0"/></svg>
<div class="a" style="left:1083.5px;top:47.5px;width:14px;height:13.5px;background:#3a3a3a;border-radius:2px"></div>
<svg style="left:1084px;top:48px;" width="14" height="12" viewBox="0 0 14 12"><rect x="1.5" y="1" width="10" height="3" fill="#e6e6e6"/><rect x="2" y="4.5" width="9" height="6.5" fill="#e6e6e6"/><rect x="4.5" y="6" width="4" height="1.2" fill="#3a3a3a"/></svg>
<div class="t" style="left:1100.2px;top:49.73px;color:#e0e0e0;">Collection</div>
<svg style="left:1236.5px;top:49.8px;" width="8" height="8" viewBox="0 0 8 8"><rect x="0.3" y="0.3" width="7.2" height="6.6" rx="0.8" fill="#e8e8e8"/><path d="M1.8 3.7 L3.3 5.2 L6 2" fill="none" stroke="#282828" stroke-width="1.2"/></svg>
<svg style="left:1248.5px;top:49px;" width="10" height="8" viewBox="0 0 10 8"><path d="M0.8 4 Q4.9 -0.6 9 4 Q4.9 8.6 0.8 4Z" fill="none" stroke="#e6e6e6" stroke-width="1.1"/><circle cx="4.9" cy="4" r="1.4" fill="#e6e6e6"/></svg>
<svg style="left:1261.8px;top:48.5px;" width="10" height="9" viewBox="0 0 10 9"><rect x="0.2" y="1.8" width="9.3" height="6.8" rx="0.8" fill="#e6e6e6"/><rect x="2.8" y="0.6" width="4" height="1.6" fill="#e6e6e6"/><circle cx="4.85" cy="5.2" r="2" fill="none" stroke="#282828" stroke-width="0.9"/><circle cx="4.85" cy="5.2" r="0.7" fill="#282828"/></svg>
<div class="a" style="left:1077px;top:62px;width:0.8px;height:36px;background:#3e3e3e;"></div>
<svg style="left:1062.5px;top:65.5px;" width="4" height="4" viewBox="0 0 4 4"><circle cx="2" cy="2" r="1.3" fill="#d8d8d8"/></svg>
<svg style="left:1088px;top:63.5px;" width="7" height="8" viewBox="0 0 7 8"><path d="M1.5 1 L5.5 3.8 L1.5 6.6Z" fill="#d0d0d0"/></svg>
<svg style="left:1098.5px;top:61.5px;" width="12" height="12" viewBox="0 0 12 12"><path d="M2.2 2.3 H9.8 L6 10.2Z" fill="#24160c" stroke="#d49c6a" stroke-width="1.7" stroke-linejoin="round"/></svg>
<div class="t" style="left:1113.8px;top:62.83px;color:#e0e0e0;">Circle</div>
<svg style="left:1147.5px;top:61.5px;" width="12" height="12" viewBox="0 0 12 12"><path d="M3 3 L9 3 L6 9.5Z" fill="none" stroke="#3aa070" stroke-width="1"/><circle cx="2.5" cy="2.5" r="1.4" fill="none" stroke="#3aa070" stroke-width="0.9"/><circle cx="9.5" cy="2.5" r="1.4" fill="none" stroke="#3aa070" stroke-width="0.9"/><circle cx="6" cy="10" r="1.4" fill="none" stroke="#3aa070" stroke-width="0.9"/></svg>
<svg style="left:1248.5px;top:62.5px;" width="10" height="8" viewBox="0 0 10 8"><path d="M0.8 4 Q4.9 -0.6 9 4 Q4.9 8.6 0.8 4Z" fill="none" stroke="#e6e6e6" stroke-width="1.1"/><circle cx="4.9" cy="4" r="1.4" fill="#e6e6e6"/></svg>
<svg style="left:1261.8px;top:62.0px;" width="10" height="9" viewBox="0 0 10 9"><rect x="0.2" y="1.8" width="9.3" height="6.8" rx="0.8" fill="#e6e6e6"/><rect x="2.8" y="0.6" width="4" height="1.6" fill="#e6e6e6"/><circle cx="4.85" cy="5.2" r="2" fill="none" stroke="#282828" stroke-width="0.9"/><circle cx="4.85" cy="5.2" r="0.7" fill="#282828"/></svg>
<div class="a" style="left:1057.8px;top:72.4px;width:219.5px;height:14.2px;background:#354e86;"></div>
<svg style="left:1058.5px;top:74.5px;" width="12" height="12" viewBox="0 0 12 12"><g fill="#d8e4f8"><rect x="1" y="1" width="2" height="2"/><rect x="5" y="1" width="2" height="2"/><rect x="9" y="1" width="2" height="2"/><rect x="3" y="3" width="2" height="2"/><rect x="7" y="3" width="2" height="2"/><rect x="1" y="5" width="2" height="2"/><rect x="5" y="5" width="2" height="2"/><rect x="9" y="5" width="2" height="2"/><rect x="2" y="8" width="2" height="3" fill="#a8bde0"/><rect x="5" y="8" width="2" height="3" fill="#a8bde0"/></g></svg>
<svg style="left:1088px;top:76.6px;" width="7" height="8" viewBox="0 0 7 8"><path d="M1.5 1 L5.5 3.8 L1.5 6.6Z" fill="#e0e8f8"/></svg>
<div class="a" style="left:1097.5px;top:73.8px;width:13px;height:12.8px;background:#56668e;border-radius:2px"></div>
<svg style="left:1098.5px;top:74.6px;" width="12" height="12" viewBox="0 0 12 12"><path d="M2.2 2.3 H9.8 L6 10.2Z" fill="#24160c" stroke="#a89070" stroke-width="1.7" stroke-linejoin="round"/></svg>
<div class="t" style="left:1113.8px;top:75.94px;color:#f0f0f0;">Circle.001</div>
<svg style="left:1163.5px;top:74.6px;" width="12" height="12" viewBox="0 0 12 12"><path d="M3 3 L9 3 L6 9.5Z" fill="none" stroke="#48a8d0" stroke-width="1"/><circle cx="2.5" cy="2.5" r="1.4" fill="none" stroke="#48a8d0" stroke-width="0.9"/><circle cx="9.5" cy="2.5" r="1.4" fill="none" stroke="#48a8d0" stroke-width="0.9"/><circle cx="6" cy="10" r="1.4" fill="none" stroke="#48a8d0" stroke-width="0.9"/></svg>
<svg style="left:1248.5px;top:75.6px;" width="10" height="8" viewBox="0 0 10 8"><path d="M0.8 4 Q4.9 -0.6 9 4 Q4.9 8.6 0.8 4Z" fill="none" stroke="#f0f4fa" stroke-width="1.1"/><circle cx="4.9" cy="4" r="1.4" fill="#f0f4fa"/></svg>
<svg style="left:1261.8px;top:75.1px;" width="10" height="9" viewBox="0 0 10 9"><rect x="0.2" y="1.8" width="9.3" height="6.8" rx="0.8" fill="#f0f4fa"/><rect x="2.8" y="0.6" width="4" height="1.6" fill="#f0f4fa"/><circle cx="4.85" cy="5.2" r="2" fill="none" stroke="#354e86" stroke-width="0.9"/><circle cx="4.85" cy="5.2" r="0.7" fill="#354e86"/></svg>
<svg style="left:1062.5px;top:92px;" width="4" height="4" viewBox="0 0 4 4"><circle cx="2" cy="2" r="1.3" fill="#d8d8d8"/></svg>
<svg style="left:1088px;top:90px;" width="7" height="8" viewBox="0 0 7 8"><path d="M1.5 1 L5.5 3.8 L1.5 6.6Z" fill="#d0d0d0"/></svg>
<svg style="left:1098.5px;top:88px;" width="12" height="12" viewBox="0 0 12 12"><path d="M2.2 2.3 H9.8 L6 10.2Z" fill="#24160c" stroke="#d49c6a" stroke-width="1.7" stroke-linejoin="round"/></svg>
<div class="t" style="left:1113.8px;top:89.34px;color:#e0e0e0;">Plane</div>
<svg style="left:1147.5px;top:88px;" width="12" height="12" viewBox="0 0 12 12"><path d="M3 3 L9 3 L6 9.5Z" fill="none" stroke="#3aa070" stroke-width="1"/><circle cx="2.5" cy="2.5" r="1.4" fill="none" stroke="#3aa070" stroke-width="0.9"/><circle cx="9.5" cy="2.5" r="1.4" fill="none" stroke="#3aa070" stroke-width="0.9"/><circle cx="6" cy="10" r="1.4" fill="none" stroke="#3aa070" stroke-width="0.9"/></svg>
<svg style="left:1248.5px;top:89px;" width="10" height="8" viewBox="0 0 10 8"><path d="M0.8 4 Q4.9 -0.6 9 4 Q4.9 8.6 0.8 4Z" fill="none" stroke="#e6e6e6" stroke-width="1.1"/><circle cx="4.9" cy="4" r="1.4" fill="#e6e6e6"/></svg>
<svg style="left:1261.8px;top:88.5px;" width="10" height="9" viewBox="0 0 10 9"><rect x="0.2" y="1.8" width="9.3" height="6.8" rx="0.8" fill="#e6e6e6"/><rect x="2.8" y="0.6" width="4" height="1.6" fill="#e6e6e6"/><circle cx="4.85" cy="5.2" r="2" fill="none" stroke="#282828" stroke-width="0.9"/><circle cx="4.85" cy="5.2" r="0.7" fill="#282828"/></svg>
<div class="a" style="left:1057.5px;top:137.8px;width:220px;height:566.2px;background:#2e2e2e;"></div>
<div class="a" style="left:1275px;top:154px;width:2.5px;height:550px;background:#262626;"></div>
<div class="a" style="left:1057.5px;top:137.8px;width:220px;height:16.2px;background:#303030;"></div>
<svg style="left:1063px;top:139px;" width="20" height="14" viewBox="0 0 20 14"><rect x="1.5" y="1.5" width="10" height="4.5" rx="2.2" fill="none" stroke="#e6e6e6" stroke-width="1"/><circle cx="4" cy="3.75" r="1.6" fill="#e6e6e6"/><rect x="1.5" y="7.5" width="10" height="4.5" rx="2.2" fill="#e6e6e6"/><circle cx="9" cy="9.75" r="1.4" fill="#303030"/><path d="M14 6l1.6 1.6 1.6-1.6" fill="none" stroke="#c8c8c8" stroke-width="1.2"/></svg>
<div class="a" style="left:1132.4px;top:139.6px;width:72.5px;height:12px;background:#1f1f1f;border-radius:3px"></div>
<svg style="left:1136px;top:140px;" width="12" height="12" viewBox="0 0 12 12"><circle cx="7" cy="5" r="3" fill="none" stroke="#e6e6e6" stroke-width="1.1"/><path d="M4.8 7.2 L2 10" stroke="#e6e6e6" stroke-width="1.3"/></svg>
<svg style="left:1263px;top:143.5px;" width="8" height="6" viewBox="0 0 8 6"><path d="M1 1.5l2.7 2.7 2.7-2.7" fill="none" stroke="#c8c8c8" stroke-width="1.2"/></svg>
<div class="a" style="left:1057.5px;top:154px;width:18px;height:550px;background:#1e1e1e;"></div>
<div class="a" style="left:1058px;top:156px;width:18.5px;height:22px;background:#2e2e2e;border-radius:3px 0 0 3px"></div>
<svg style="left:1061.5px;top:162.4px;opacity:0.72" width="12" height="12" viewBox="0 0 12 12"><g transform="scale(0.92)"><path d="M3 3 V8 M1.8 8 H4.2 V12 H1.8Z M3 1.5 V3" stroke="#e6e6e6" stroke-width="1.2" fill="none"/><path d="M3 8.5 h1.2v3.5h-2.4v-3.5z" fill="#e6e6e6"/><path d="M7.5 1.5 Q7.5 4.5 9.5 4.5 Q11.5 4.5 11.5 1.5 M9.5 4.5 V12" stroke="#e6e6e6" stroke-width="1.3" fill="none"/></g></svg>
<svg style="left:1061.5px;top:186px;opacity:0.72" width="12" height="12" viewBox="0 0 12 12"><g transform="scale(0.92)"><path d="M2 5 H11 V11.5 H2Z" fill="none" stroke="#e6e6e6" stroke-width="1"/><path d="M2 5 L4 2.5 H8" stroke="#e6e6e6" stroke-width="1" fill="none"/><rect x="8" y="7" width="3" height="4" fill="#e6e6e6"/></g></svg>
<svg style="left:1061.5px;top:205.5px;opacity:0.72" width="12" height="12" viewBox="0 0 12 12"><g transform="scale(0.92)"><rect x="2" y="3" width="9" height="8.5" fill="none" stroke="#e6e6e6" stroke-width="1"/><path d="M2 5.5H11M4 8h5" stroke="#e6e6e6" stroke-width="1"/><rect x="1" y="1" width="11" height="2" fill="#e6e6e6"/></g></svg>
<svg style="left:1061.5px;top:224.5px;opacity:0.72" width="12" height="12" viewBox="0 0 12 12"><g transform="scale(0.92)"><rect x="4" y="1.5" width="7.5" height="7.5" fill="#999"/><rect x="1.5" y="4" width="7.5" height="7.5" fill="#e6e6e6"/><path d="M2 11 L5 7 L7 9Z" fill="#555"/></g></svg>
<svg style="left:1061.5px;top:243.2px;opacity:0.72" width="12" height="12" viewBox="0 0 12 12"><g transform="scale(0.92)"><path d="M4.5 3 L2 8 Q2 11 4.5 11 Q7 11 6.8 8Z" fill="#e6e6e6"/><circle cx="8.5" cy="8.5" r="2.5" fill="none" stroke="#e6e6e6" stroke-width="1"/><circle cx="9" cy="3" r="1.4" fill="#e6e6e6"/></g></svg>
<svg style="left:1061.5px;top:261.3px;opacity:0.72" width="12" height="12" viewBox="0 0 12 12"><g transform="scale(0.92)"><circle cx="6.5" cy="6.5" r="4.8" fill="#b04050"/><path d="M3 4.5 Q6 6 5 9 M8 2.5 Q7.5 5 10 6" stroke="#401520" stroke-width="1" fill="none"/></g></svg>
<svg style="left:1061.5px;top:285.9px;opacity:0.72" width="12" height="12" viewBox="0 0 12 12"><g transform="scale(0.92)"><rect x="1.5" y="1.5" width="10" height="3" fill="#e6e6e6"/><rect x="2" y="5" width="9" height="6.5" fill="none" stroke="#e6e6e6" stroke-width="1"/><path d="M4.5 7H8.5" stroke="#e6e6e6" stroke-width="1"/></g></svg>
<svg style="left:1061.5px;top:309.7px;opacity:0.72" width="12" height="12" viewBox="0 0 12 12"><g transform="scale(0.92)"><rect x="2.5" y="2.5" width="8" height="8" fill="#e08a4a"/><rect x="2.5" y="2.5" width="8" height="8" fill="none" stroke="#a06030" stroke-width="0.8"/></g></svg>
<svg style="left:1061.5px;top:328.4px;opacity:0.72" width="12" height="12" viewBox="0 0 12 12"><g transform="scale(0.92)"><path d="M2.5 11 L7 6.5" stroke="#6b8fd4" stroke-width="2.2" stroke-linecap="round"/><circle cx="8.5" cy="4.5" r="3" fill="#6b8fd4"/><circle cx="9.5" cy="3.5" r="1.3" fill="#202020"/></g></svg>
<svg style="left:1061.5px;top:347px;opacity:0.72" width="12" height="12" viewBox="0 0 12 12"><g transform="scale(0.92)"><circle cx="3" cy="3" r="1.5" fill="#6b8fd4"/><circle cx="10" cy="10" r="1.5" fill="#6b8fd4"/><circle cx="3" cy="10" r="1.5" fill="#ccc"/><path d="M3 3 L10 10 M3 3V10" stroke="#6b8fd4" stroke-width="0.9"/></g></svg>
<svg style="left:1061.5px;top:365.5px;opacity:0.72" width="12" height="12" viewBox="0 0 12 12"><g transform="scale(0.92)"><circle cx="6.5" cy="6.5" r="4.2" fill="none" stroke="#6b8fd4" stroke-width="1.3"/><circle cx="6.5" cy="6.5" r="1.8" fill="#ddd"/></g></svg>
<svg style="left:1061.5px;top:385px;opacity:0.72" width="12" height="12" viewBox="0 0 12 12"><g transform="scale(0.92)"><circle cx="6.5" cy="6.5" r="4.5" fill="none" stroke="#6b8fd4" stroke-width="1.2"/><path d="M2 11 L11 2" stroke="#6b8fd4" stroke-width="1.3"/><circle cx="6.5" cy="6.5" r="1.5" fill="#ddd"/></g></svg>
<svg style="left:1061.5px;top:402.8px;opacity:0.72" width="12" height="12" viewBox="0 0 12 12"><g transform="scale(0.92)"><path d="M2 2.5 H11 L6.5 11Z" fill="none" stroke="#3fbf7f" stroke-width="1.2"/><path d="M2 2.5 L6.5 6.5 L11 2.5 M6.5 6.5V11" stroke="#3fbf7f" stroke-width="0.8"/></g></svg>
<svg style="left:1061.5px;top:421.8px;opacity:0.72" width="12" height="12" viewBox="0 0 12 12"><g transform="scale(0.92)"><circle cx="6.5" cy="6.5" r="4.8" fill="#c04050"/><path d="M6.5 1.7 A4.8 4.8 0 0 1 11.3 6.5 L6.5 6.5Z" fill="#e8a0a8"/><path d="M1.7 6.5 A4.8 4.8 0 0 0 6.5 11.3 L6.5 6.5Z" fill="#501820"/></g></svg>
<svg style="left:1061.5px;top:445.5px;opacity:0.72" width="12" height="12" viewBox="0 0 12 12"><g transform="scale(0.92)"><g fill="#c04050"><rect x="1.5" y="1.5" width="3" height="3"/><rect x="7.5" y="1.5" width="3" height="3"/><rect x="4.5" y="4.5" width="3" height="3"/><rect x="10.5" y="4.5" width="1.5" height="3"/><rect x="1.5" y="7.5" width="3" height="3"/><rect x="7.5" y="7.5" width="3" height="3"/><rect x="4.5" y="10.5" width="3" height="1.5"/></g><rect x="1.5" y="1.5" width="10.5" height="10.5" fill="none" stroke="#c04050" stroke-width="0.6"/></g></svg>
<div class="a" style="left:1081.6px;top:154px;width:192px;height:493.3px;background:#373737;"></div>
<div class="a" style="left:1081.6px;top:155.3px;width:192.0px;height:20.19999999999999px;background:#3d3d3d;"></div>
<svg style="left:1096.0px;top:164.1px;" width="8" height="6" viewBox="0 0 8 6"><path d="M1 1.2l2.9 2.9 2.9-2.9" fill="none" stroke="#a8a8a8" stroke-width="1.2"/></svg>
<div class="t" style="left:1105.8px;top:162.13px;color:#d8d8d8;">Color Picker</div>
<div class="a" style="left:1087.7px;top:180.1px;width:89.3px;height:12.5px;background:#4772b3;border-radius:3px 0 0 3px"></div>
<div class="a" style="left:1177px;top:180.1px;width:90.8px;height:12.5px;background:#545454;border-radius:0 3px 3px 0"></div>
<div class="t" style="left:1087.7px;top:181.94px;color:#f0f0f0;width:89.3px;text-align:center;">Color</div>
<div class="t" style="left:1177px;top:181.94px;color:#dcdcdc;width:90.8px;text-align:center;">Gradient</div>
<div class="a" style="left:1137.7px;top:196.9px;width:65.6px;height:65.6px;background:radial-gradient(circle closest-side, rgba(222,212,218,1) 0%, rgba(215,205,212,0.6) 30%, rgba(200,195,200,0) 95%), conic-gradient(from 180deg, #d8001c, #d06010 10%, #c8c800 17%, #20d020 33%, #30c8c0 50%, #1010c8 67%, #c000c8 83%, #d8001c);border-radius:50%"></div>
<svg style="left:1166.5px;top:225.7px;" width="8" height="8" viewBox="0 0 8 8"><circle cx="4" cy="4" r="2.2" fill="#e8e8e8" stroke="#222" stroke-width="0.9"/></svg>
<div class="a" style="left:1259.7px;top:197.2px;width:8px;height:65.5px;background:linear-gradient(#e8e8e8,#0c0c0c);border-radius:3px"></div>
<svg style="left:1259px;top:207px;" width="10" height="10" viewBox="0 0 10 10"><circle cx="4.85" cy="4.5" r="2.3" fill="#e8e8e8" stroke="#222" stroke-width="0.9"/></svg>
<div class="a" style="left:1087.9px;top:267.4px;width:73.8px;height:11.7px;background:#cdcdcd;border-radius:3px 0 0 3px"></div>
<div class="a" style="left:1161.7px;top:267.4px;width:74.9px;height:11.7px;background:#000000;border-radius:0 3px 3px 0"></div>
<svg style="left:1242px;top:267px;" width="12" height="12" viewBox="0 0 12 12"><path d="M2 5 A4 4 0 0 1 9.5 4 M10 7 A4 4 0 0 1 2.5 8" fill="none" stroke="#e6e6e6" stroke-width="1.1"/><path d="M8 2.5 L10.5 4.5 L9 6Z M4 9.5 L1.5 7.5 L3 6Z" fill="#e6e6e6"/></svg>
<svg style="left:1255px;top:267px;" width="13" height="12" viewBox="0 0 13 12"><rect x="1.5" y="1.5" width="3.5" height="4" fill="#e6e6e6"/><rect x="2.5" y="5.5" width="1.5" height="5" fill="#e6e6e6"/><rect x="7.5" y="1.5" width="3.5" height="9" fill="#e6e6e6"/><path d="M9.25 3V9" stroke="#383838" stroke-width="1"/></svg>
<div class="a" style="left:1081.6px;top:286.7px;width:192.0px;height:15.900000000000034px;background:#3d3d3d;"></div>
<svg style="left:1096.0px;top:291.4px;" width="8" height="6" viewBox="0 0 8 6"><path d="M1 1.2l2.9 2.9 2.9-2.9" fill="none" stroke="#a8a8a8" stroke-width="1.2"/></svg>
<div class="t" style="left:1105.8px;top:289.43px;color:#d8d8d8;">Color Palette</div>
<svg style="left:1087px;top:308px;" width="20" height="13" viewBox="0 0 20 13"><rect x="2.5" y="1" width="3.5" height="10" rx="0.8" fill="#e6e6e6"/><path d="M7 9.5 L9.5 2 L12 3 Z" fill="#aaa"/><path d="M14 5.3l1.6 1.6 1.6-1.6" fill="none" stroke="#c8c8c8" stroke-width="1.2"/></svg>
<div class="a" style="left:1109.3px;top:309px;width:118.3px;height:10.3px;background:#1f1f1f;"></div>
<div class="t" style="left:1112.8px;top:309.63px;color:#e0e0e0;">Palette.001</div>
<div class="a" style="left:1227.6px;top:309px;width:13.4px;height:10.3px;background:#5b6f99;"></div>
<svg style="left:1228px;top:309px;" width="13" height="11" viewBox="0 0 13 11"><path d="M6.5 1 L11 2.5 V5.5 Q11 9 6.5 10.3 Q2 9 2 5.5 V2.5Z" fill="#e8eef8"/><path d="M4.3 5.5 L6 7.2 L9 4" fill="none" stroke="#5b6f99" stroke-width="1.1"/></svg>
<div class="a" style="left:1241px;top:309px;width:27px;height:10.3px;background:#474747;border-radius:0 3px 3px 0"></div>
<svg style="left:1242px;top:309px;" width="13" height="11" viewBox="0 0 13 11"><path d="M5 1.5h3.5l2 2V8.5H5z M3 3v6.5h5" fill="none" stroke="#d0d0d0" stroke-width="0.9"/></svg>
<svg style="left:1257px;top:310px;" width="9" height="9" viewBox="0 0 9 9"><path d="M1.5 1.5L7 7M7 1.5L1.5 7" stroke="#bbb" stroke-width="1"/></svg>
<div class="a" style="left:1088px;top:324.7px;width:51.6px;height:11.3px;background:#474747;border-radius:3px"></div>
<svg style="left:1088px;top:324.7px;" width="66" height="12" viewBox="0 0 66 12"><path d="M6 3V9M3 6H9" stroke="#e6e6e6" stroke-width="1.2"/><path d="M16.2 6H22.2" stroke="#e6e6e6" stroke-width="1.2"/><path d="M32.2 3.5 L35.2 8 H29.2Z" fill="#e6e6e6"/><path d="M42.6 4 H48.6 L45.6 8.5Z" fill="#e6e6e6"/><path d="M54 2.5H63M54 4.5H62M54 6.5H60M54 8.5H58M54 10.5H56" stroke="#e6e6e6" stroke-width="0.8"/></svg>
<div class="a" style="left:1088.0px;top:341px;width:12.5px;height:12.1px;background:#f0902e;border-radius:3px 0 0 3px"></div>
<div class="a" style="left:1101.05px;top:341px;width:12.5px;height:12.1px;background:#f5ac2e;border-radius:0"></div>
<div class="a" style="left:1114.1px;top:341px;width:12.5px;height:12.1px;background:#ee6a80;border-radius:0"></div>
<div class="a" style="left:1127.15px;top:341px;width:12.5px;height:12.1px;background:#d4d5d9;border-radius:0"></div>
<div class="a" style="left:1140.2px;top:341px;width:12.5px;height:12.1px;background:#ececec;border-radius:0 3px 3px 0"></div>
<svg style="left:1140.2px;top:341px;" width="8" height="8" viewBox="0 0 8 8"><path d="M0.5 0.5H6L0.5 6Z" fill="#666"/></svg>
<div class="a" style="left:1081.6px;top:359.3px;width:192.0px;height:17.5px;background:#3d3d3d;"></div>
<svg style="left:1096.0px;top:365.5px;" width="8" height="6" viewBox="0 0 8 6"><path d="M1 1.2l2.9 2.9 2.9-2.9" fill="none" stroke="#a8a8a8" stroke-width="1.2"/></svg>
<div class="t" style="left:1105.7px;top:363.53px;color:#d8d8d8;">Advanced</div>
<div class="a" style="left:1162.9px;top:384px;width:8.1px;height:8.1px;background:#4772b3;border-radius:2px"></div>
<svg style="left:1162.9px;top:384px;" width="9" height="9" viewBox="0 0 9 9"><path d="M1.8 4.2 L3.5 6 L6.6 2.3" fill="none" stroke="#fff" stroke-width="1.1"/></svg>
<div class="t" style="left:1173.6px;top:383.53px;color:#e0e0e0;">Affect Alpha</div>
<div class="a" style="left:1162.9px;top:398.6px;width:8.1px;height:8.1px;background:#545454;border-radius:2px"></div>
<div class="t" style="left:1173.6px;top:398.13px;color:#e0e0e0;">Accumulate</div>
<div class="a" style="left:1081.6px;top:414.5px;width:192.0px;height:16.5px;background:#3d3d3d;"></div>
<svg style="left:1097.3px;top:419.8px;" width="6" height="8" viewBox="0 0 6 8"><path d="M1.2 1l2.9 2.9-2.9 2.9" fill="none" stroke="#a8a8a8" stroke-width="1.15"/></svg>
<div class="t" style="left:1105.7px;top:418.83px;color:#d8d8d8;">Texture</div>
<div class="a" style="left:1081.6px;top:431px;width:192px;height:1px;background:#373737;"></div>
<div class="a" style="left:1081.6px;top:432px;width:192.0px;height:16px;background:#3d3d3d;"></div>
<svg style="left:1097.3px;top:436.4px;" width="6" height="8" viewBox="0 0 6 8"><path d="M1.2 1l2.9 2.9-2.9 2.9" fill="none" stroke="#a8a8a8" stroke-width="1.15"/></svg>
<div class="t" style="left:1105.7px;top:435.43px;color:#d8d8d8;">Texture Mask</div>
<div class="a" style="left:1081.6px;top:448px;width:192px;height:1px;background:#373737;"></div>
<div class="a" style="left:1081.6px;top:449px;width:192.0px;height:15.699999999999989px;background:#3d3d3d;"></div>
<svg style="left:1096.0px;top:454.0px;" width="8" height="6" viewBox="0 0 8 6"><path d="M1 1.2l2.9 2.9 2.9-2.9" fill="none" stroke="#a8a8a8" stroke-width="1.2"/></svg>
<div class="t" style="left:1105.7px;top:452.03px;color:#d8d8d8;">Stroke</div>
<div class="t" style="left:1056.4px;top:472.03px;color:#d0d0d0;width:100px;text-align:right;">Stroke Method</div>
<div class="a" style="left:1163.6px;top:471.3px;width:103.90000000000009px;height:10.7px;background:#282828;border-radius:3px"></div>
<div class="t" style="left:1167.2px;top:472.03px;color:#e0e0e0;">Line</div>
<svg style="left:1259.5px;top:474.0px;" width="8" height="6" viewBox="0 0 8 6"><path d="M1 1.2l2.9 2.9 2.9-2.9" fill="none" stroke="#d0d0d0" stroke-width="1.2"/></svg>
<div class="t" style="left:1056.4px;top:492.03px;color:#d0d0d0;width:100px;text-align:right;">Spacing</div>
<div class="a" style="left:1163.6px;top:491.4px;width:103.90000000000009px;height:10.8px;background:#545454;border-radius:3px"></div>
<div class="t" style="left:1163.6px;top:492.33px;color:#e0e0e0;width:103.90000000000009px;text-align:center;">10%</div>
<div class="a" style="left:1163.6px;top:507.2px;width:7.8px;height:7.8px;background:#545454;border-radius:2px"></div>
<div class="t" style="left:1173.6px;top:506.73px;color:#e0e0e0;">Adjust Strength for Spacing</div>
<div class="t" style="left:1056.4px;top:527.93px;color:#d0d0d0;width:100px;text-align:right;">Dash Ratio</div>
<div class="a" style="left:1163.6px;top:527px;width:103.90000000000009px;height:11.3px;background:#4772b3;border-radius:3px"></div>
<div class="t" style="left:1163.6px;top:528.18px;color:#f0f0f0;width:103.90000000000009px;text-align:center;">1.000</div>
<div class="t" style="left:1056.4px;top:542.53px;color:#d0d0d0;width:100px;text-align:right;">Dash Length</div>
<div class="a" style="left:1163.6px;top:541.6px;width:103.90000000000009px;height:10.8px;background:#545454;border-radius:3px"></div>
<div class="t" style="left:1163.6px;top:542.53px;color:#e0e0e0;width:103.90000000000009px;text-align:center;">20</div>
<div class="t" style="left:1056.4px;top:562.63px;color:#d0d0d0;width:100px;text-align:right;">Jitter</div>
<div class="a" style="left:1163.6px;top:561.7px;width:90.30000000000018px;height:10.8px;background:#545454;border-radius:3px 0 0 3px"></div>
<div class="t" style="left:1163.6px;top:562.63px;color:#e0e0e0;width:90.30000000000018px;text-align:center;">0.0000</div>
<div class="a" style="left:1253.9px;top:561.7px;width:13.6px;height:10.8px;background:#474747;border-radius:0 3px 3px 0"></div>
<svg style="left:1254.5px;top:561.5px;" width="12" height="12" viewBox="0 0 12 12"><path d="M3 8.5 L8 3 L9.5 4.5 L4.5 10Z" fill="#e0e0e0"/><path d="M2 10h2" stroke="#bbb" stroke-width="0.8"/></svg>
<div class="t" style="left:1056.4px;top:577.33px;color:#d0d0d0;width:100px;text-align:right;">Jitter Unit</div>
<div class="a" style="left:1163.6px;top:576.4px;width:50.90000000000009px;height:10.8px;background:#545454;border-radius:3px 0 0 3px"></div>
<div class="t" style="left:1163.6px;top:577.33px;color:#e0e0e0;width:50.90000000000009px;text-align:center;">View</div>
<div class="a" style="left:1214.5px;top:576.4px;width:53.0px;height:10.8px;background:#4772b3;border-radius:0 3px 3px 0"></div>
<div class="t" style="left:1214.5px;top:577.33px;color:#f0f0f0;width:53.0px;text-align:center;">Brush</div>
<div class="t" style="left:1056.4px;top:597.43px;color:#d0d0d0;width:100px;text-align:right;">Input Samples</div>
<div class="a" style="left:1163.6px;top:596.5px;width:103.90000000000009px;height:10.8px;background:#545454;border-radius:3px"></div>
<div class="t" style="left:1163.6px;top:597.43px;color:#e0e0e0;width:103.90000000000009px;text-align:center;">1</div>
<svg style="left:1097.3px;top:618.9px;" width="6" height="8" viewBox="0 0 6 8"><path d="M1.2 1l2.9 2.9-2.9 2.9" fill="none" stroke="#a8a8a8" stroke-width="1.15"/></svg>
<div class="t" style="left:1105.8px;top:617.93px;color:#d8d8d8;">Falloff</div>
<div class="a" style="left:1081.6px;top:630.5px;width:192px;height:0.8px;background:#333;"></div>
<svg style="left:1097.3px;top:635.9px;" width="6" height="8" viewBox="0 0 6 8"><path d="M1.2 1l2.9 2.9-2.9 2.9" fill="none" stroke="#a8a8a8" stroke-width="1.15"/></svg>
<div class="a" style="left:1104.8px;top:635.4px;width:8.3px;height:8.5px;background:#4772b3;border-radius:2px"></div>
<svg style="left:1104.8px;top:635.4px;" width="9" height="9" viewBox="0 0 9 9"><path d="M1.9 4.4 L3.6 6.2 L6.8 2.4" fill="none" stroke="#fff" stroke-width="1.1"/></svg>
<div class="t" style="left:1115.7px;top:634.93px;color:#e0e0e0;">Cursor</div>
<div class="a" style="left:1081.6px;top:648.9px;width:192px;height:16.300000000000068px;background:#3d3d3d;"></div>
<svg style="left:1088.0px;top:653.8px;" width="6" height="8" viewBox="0 0 6 8"><path d="M1.2 1l2.9 2.9-2.9 2.9" fill="none" stroke="#a8a8a8" stroke-width="1.15"/></svg>
<div class="t" style="left:1096.6px;top:652.83px;color:#d8d8d8;">Masking</div>
<svg style="left:1257px;top:654.3px;" width="14" height="7" viewBox="0 0 14 7"><g fill="#4a4a4a"><rect x="1" y="1" width="12" height="0.7"/><rect x="1" y="3" width="12" height="0.7"/><rect x="1" y="5" width="12" height="0.7"/></g></svg>
<div class="a" style="left:1081.6px;top:666.8px;width:192px;height:16.200000000000045px;background:#3d3d3d;"></div>
<svg style="left:1088.0px;top:671.6px;" width="6" height="8" viewBox="0 0 6 8"><path d="M1.2 1l2.9 2.9-2.9 2.9" fill="none" stroke="#a8a8a8" stroke-width="1.15"/></svg>
<div class="t" style="left:1096.6px;top:670.63px;color:#d8d8d8;">Symmetry</div>
<svg style="left:1257px;top:672.1px;" width="14" height="7" viewBox="0 0 14 7"><g fill="#4a4a4a"><rect x="1" y="1" width="12" height="0.7"/><rect x="1" y="3" width="12" height="0.7"/><rect x="1" y="5" width="12" height="0.7"/></g></svg>
<div class="a" style="left:1081.6px;top:684.6px;width:192px;height:19.399999999999977px;background:#3d3d3d;"></div>
<svg style="left:1087.0px;top:690.8px;" width="8" height="6" viewBox="0 0 8 6"><path d="M1 1.2l2.9 2.9 2.9-2.9" fill="none" stroke="#a8a8a8" stroke-width="1.2"/></svg>
<div class="t" style="left:1096.6px;top:688.83px;color:#d8d8d8;">Options</div>
<svg style="left:1257px;top:690.3px;" width="14" height="7" viewBox="0 0 14 7"><g fill="#4a4a4a"><rect x="1" y="1" width="12" height="0.7"/><rect x="1" y="3" width="12" height="0.7"/><rect x="1" y="5" width="12" height="0.7"/></g></svg>
</body></html>
